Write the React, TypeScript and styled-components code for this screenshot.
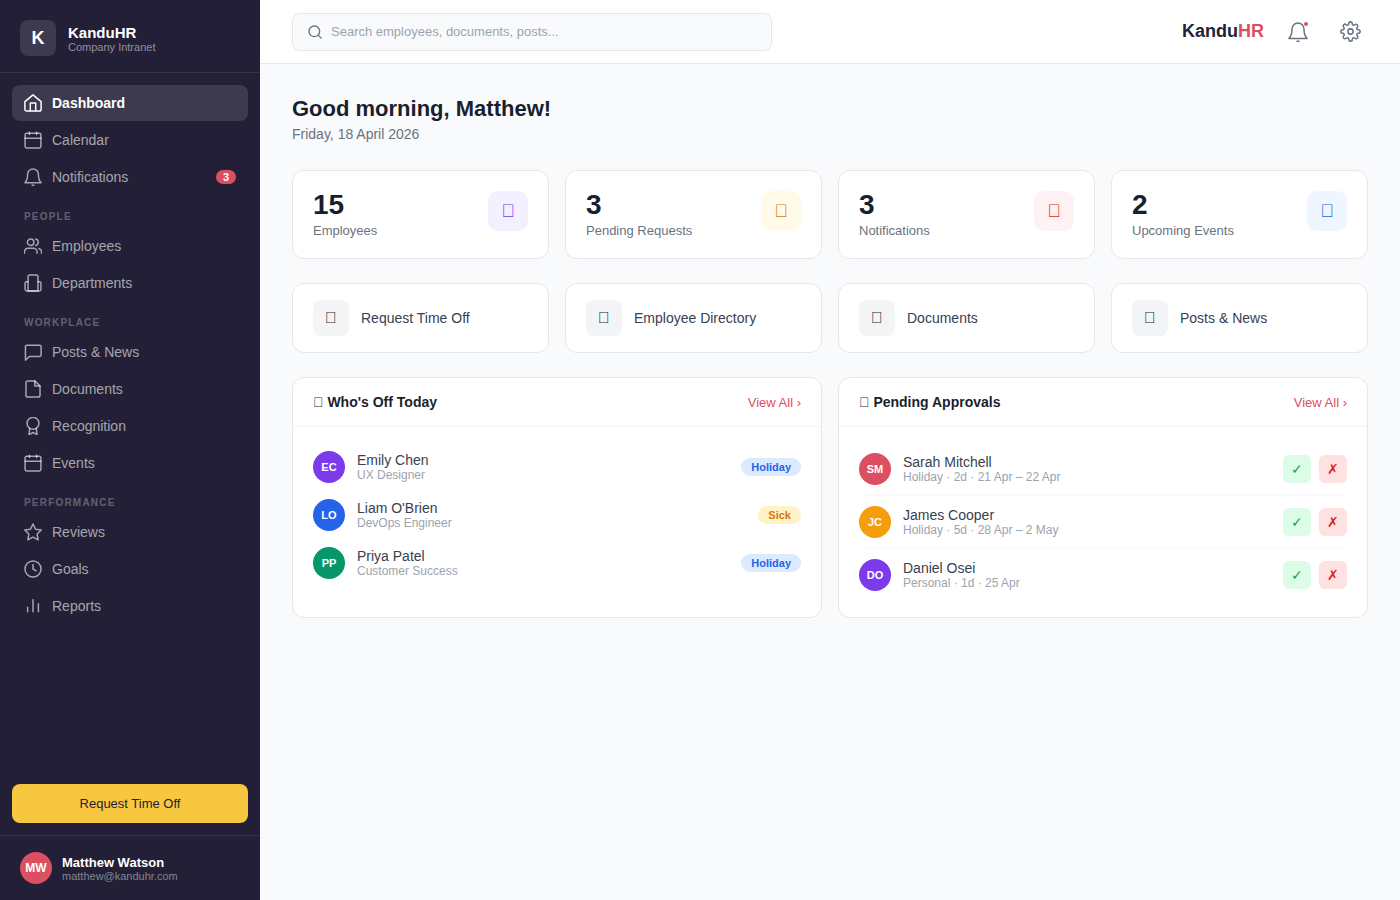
import React from "react";
import styled, { createGlobalStyle } from "styled-components";

const Global = createGlobalStyle`
  * { box-sizing: border-box; }
  html, body { margin: 0; padding: 0; height: 100%; }
  body { font-family: "Liberation Sans", Arial, sans-serif; background: #f9fafb; color: #1a1f2e; }
  button, input { font-family: inherit; }
`;

const Shell = styled.div`display: flex; height: 900px; overflow: hidden;`;
const Sidebar = styled.aside`width: 260px; flex: none; background: #231f36; display: flex; flex-direction: column; height: 900px;`;
const Brand = styled.div`display: flex; align-items: center; gap: 12px; padding: 20px 20px 16px; height: 73px; border-bottom: 1px solid rgba(255,255,255,.08);`;
const BrandMark = styled.div`width: 36px; height: 36px; border-radius: 8px; background: #3d394e; color: #fff; font-weight: 700; font-size: 18px; display: flex; align-items: center; justify-content: center;`;
const BrandText = styled.div`display: flex; flex-direction: column; margin-top: 1px;`;
const BrandName = styled.div`color: #fff; font-weight: 700; font-size: 15px; line-height: 17px;`;
const BrandSub = styled.div`color: rgba(255,255,255,.5); font-size: 11px; line-height: 13px;`;
const Nav = styled.nav`flex: 1; padding: 12px; display: flex; flex-direction: column; gap: 1px;`;
const NavItem = styled.div<{ $active?: boolean }>`
  display: flex; align-items: center; gap: 10px; height: 36px; padding: 0 12px; border-radius: 8px; font-size: 14px;
  font-weight: ${p => (p.$active ? 700 : 400)};
  color: ${p => (p.$active ? "#fff" : "rgba(255,255,255,.6)")};
  background: ${p => (p.$active ? "rgba(255,255,255,.12)" : "transparent")};
  svg { flex: none; }
`;
const NavLabel = styled.span`flex: 1;`;
const NavBadge = styled.span`background: #dc4f60; color: #fff; font-size: 11px; font-weight: 700; border-radius: 10px; padding: 1px 7px; line-height: 12px;`;
const Section = styled.div`color: rgba(255,255,255,.3); font-size: 10px; font-weight: 700; letter-spacing: 1.2px; line-height: 12px; padding: 15px 12px 4px;`;
const CtaWrap = styled.div`padding: 0 12px 12px;`;
const Cta = styled.button`width: 100%; height: 39px; border: none; border-radius: 8px; background: #f7c83f; color: #231f36; font-size: 13px;`;
const UserBar = styled.div`display: flex; align-items: center; gap: 10px; padding: 16px 20px; height: 65px; border-top: 1px solid rgba(255,255,255,.08);`;
const UserAvatar = styled.div`width: 32px; height: 32px; border-radius: 50%; background: #dc4f60; color: #fff; font-size: 12px; font-weight: 700; display: flex; align-items: center; justify-content: center;`;
const UserText = styled.div`display: flex; flex-direction: column; margin-top: 2px;`;
const UserName = styled.div`color: #fff; font-size: 13px; font-weight: 700; line-height: 15px;`;
const UserMail = styled.div`color: rgba(255,255,255,.45); font-size: 11px; line-height: 13px;`;

const Main = styled.main`flex: 1; min-width: 0; display: flex; flex-direction: column;`;
const Topbar = styled.header`height: 64px; flex: none; background: #fff; border-bottom: 1px solid #e5e7eb; padding: 0 32px; display: flex; align-items: center; justify-content: space-between;`;
const Search = styled.div`width: 480px; height: 38px; border: 1px solid #e5e7eb; background: #f9fafb; border-radius: 8px; padding: 0 14px; display: flex; align-items: center; gap: 8px; color: #9ca3af; font-size: 13px;`;
const SearchGlyph = styled.span`display: flex; color: #6b7280;`;
const TopRight = styled.div`display: flex; align-items: center; gap: 16px;`;
const Logo = styled.div`font-size: 18px; font-weight: 700; color: #231f36;`;
const LogoAccent = styled.span`color: #dc4f60;`;
const IconBtn = styled.div`width: 36px; height: 36px; display: flex; align-items: center; justify-content: center; color: #6b7280; position: relative;`;
const Dot = styled.span`position: absolute; top: 8px; right: 8px; width: 4px; height: 4px; border-radius: 50%; background: #dc4f60;`;

const Content = styled.div`padding: 32px; display: flex; flex-direction: column;`;
const Title = styled.h1`margin: 0; font-size: 22px; line-height: 26px; font-weight: 700; color: #1a1f2e;`;
const Sub = styled.p`margin: 4px 0 0; font-size: 14px; line-height: 16px; color: #6b7280;`;
const Grid4 = styled.div<{ $top: number }>`display: grid; grid-template-columns: repeat(4, 1fr); gap: 16px; margin-top: ${p => p.$top}px;`;
const StatCard = styled.div`height: 89px; background: #fff; border: 1px solid #e5e7eb; border-radius: 12px; padding: 20px; display: flex; justify-content: space-between; align-items: flex-start;`;
const StatText = styled.div`display: flex; flex-direction: column;`;
const StatValue = styled.div`font-size: 28px; line-height: 28px; font-weight: 700; color: #1a1f2e; margin-bottom: 4px;`;
const StatLabel = styled.div`font-size: 13px; line-height: 15px; color: #6b7280;`;
const StatIcon = styled.div<{ $bg: string; $fg: string }>`width: 40px; height: 40px; border-radius: 10px; background: ${p => p.$bg}; color: ${p => p.$fg}; font-size: 18px; display: flex; align-items: center; justify-content: center;`;
const QuickCard = styled.div`height: 70px; background: #fff; border: 1px solid #e5e7eb; border-radius: 12px; padding: 0 20px; display: flex; align-items: center; gap: 12px; font-size: 14px; color: #374151;`;
const QuickIcon = styled.div`width: 36px; height: 36px; border-radius: 8px; background: #f3f4f6; color: #1a1f2e; font-size: 16px; display: flex; align-items: center; justify-content: center;`;
const Panels = styled.div`display: grid; grid-template-columns: 1fr 1fr; gap: 16px; margin-top: 24px;`;
const Panel = styled.section`height: 241px; background: #fff; border: 1px solid #e5e7eb; border-radius: 12px; overflow: hidden;`;
const PanelHead = styled.div`height: 49px; padding: 0 20px; display: flex; align-items: center; justify-content: space-between; border-bottom: 1px solid #f3f4f6;`;
const PanelTitle = styled.div`font-size: 14px; font-weight: 700; color: #1a1f2e;`;
const ViewAll = styled.a`font-size: 13px; color: #dc4f60;`;
const PanelBody = styled.div`padding: 16px 20px;`;
const OffRow = styled.div`height: 48px; display: flex; align-items: center; gap: 12px;`;
const Avatar = styled.div<{ $bg: string }>`width: 32px; height: 32px; border-radius: 50%; flex: none; background: ${p => p.$bg}; color: #fff; font-size: 11px; font-weight: 700; display: flex; align-items: center; justify-content: center;`;
const Person = styled.div`flex: 1; display: flex; flex-direction: column;`;
const PersonName = styled.div`font-size: 14px; line-height: 16px; color: #374151;`;
const PersonSub = styled.div`font-size: 12px; line-height: 14px; color: #9ca3af;`;
const Tag = styled.span<{ $bg: string; $fg: string }>`background: ${p => p.$bg}; color: ${p => p.$fg}; font-size: 11px; font-weight: 700; line-height: 18px; padding: 0 10px; border-radius: 10px;`;
const ApprovalRow = styled.div`height: 53px; display: flex; align-items: center; gap: 12px; border-bottom: 1px solid #f9fafb; &:last-child { border-bottom: none; height: 52px; }`;
const Actions = styled.div`display: flex; gap: 8px;`;
const ActionBtn = styled.div<{ $bg: string; $fg: string }>`width: 28px; height: 28px; border-radius: 6px; background: ${p => p.$bg}; color: ${p => p.$fg}; font-size: 14px; display: flex; align-items: center; justify-content: center;`;

const Ico: React.FC<{ size?: number; box?: string; sw?: number; children: React.ReactNode }> = ({ size = 18, box = "2 2 20 20", sw = 1.65, children }) => (
  <svg width={size} height={size} viewBox={box} fill="none" stroke="currentColor" strokeWidth={sw} strokeLinecap="round" strokeLinejoin="round">{children}</svg>
);
const bellPaths = (
  <>
    <path d="M6 9a6 6 0 0 1 12 0c0 6 1.2 7.6 3 9.4H3C4.8 16.6 6 15 6 9z" />
    <path d="M11 21.2h2" />
  </>
);
const calPaths = (
  <>
    <rect x="3.2" y="4.6" width="17.6" height="16.2" rx="1.8" />
    <path d="M8 3.4v2.4M16 3.4v2.4M3.2 10h17.6" />
  </>
);
const I = {
  home: <Ico><path d="M3 10.5 12 3l9 7.5V19a2 2 0 0 1-2 2H5a2 2 0 0 1-2-2z" /><path d="M9 21v-9h6v9" /></Ico>,
  cal: <Ico>{calPaths}</Ico>,
  bell: <Ico>{bellPaths}</Ico>,
  users: <Ico><circle cx="9.4" cy="7.8" r="3.6" /><path d="M2.5 20v-1.4a4 4 0 0 1 4-4h6a4 4 0 0 1 4 4V20" /><path d="M15 4.2a3.7 3.7 0 0 1 0 7.2M21.5 20v-1.4a4 4 0 0 0-3-3.8" /></Ico>,
  dept: <Ico><path d="M6.5 20.8V4.8a1.8 1.8 0 0 1 1.8-1.8h7.4a1.8 1.8 0 0 1 1.8 1.8v16z" /><path d="M6.5 10.5H5a1.8 1.8 0 0 0-1.8 1.8V19A1.8 1.8 0 0 0 5 20.8h14a1.8 1.8 0 0 0 1.8-1.8v-6.7A1.8 1.8 0 0 0 19 10.5h-1.5" /></Ico>,
  chat: <Ico><path d="M3.6 21V6A1.6 1.6 0 0 1 5.2 4.4h14.2A1.6 1.6 0 0 1 21 6v9.4a1.6 1.6 0 0 1-1.6 1.6H8z" /></Ico>,
  doc: <Ico><path d="M14 3H6.2a2 2 0 0 0-2 2v14a2 2 0 0 0 2 2h11.6a2 2 0 0 0 2-2V8.6z" /><path d="M14 3v5.6h5.8" /></Ico>,
  award: <Ico><circle cx="12" cy="9" r="6.6" /><path d="M8.4 14.6 7.5 21.6l4.5-2.4 4.5 2.4-.9-7" /></Ico>,
  star: <Ico><path d="M12 3.1l2.8 5.8 6.4.9-4.6 4.5 1.1 6.4-5.7-3-5.7 3 1.1-6.4-4.6-4.5 6.4-.9z" /></Ico>,
  clock: <Ico><circle cx="12" cy="12" r="8.9" /><path d="M12 7v5l3.5 2" /></Ico>,
  bars: <Ico><path d="M6 18.4v-5M12 18.4V5M18 18.4V9.4" /></Ico>,
  search: <Ico size={16} box="0 0 24 24" sw={2}><circle cx="11" cy="11" r="8" /><path d="m21 21-4.3-4.3" /></Ico>,
  gear: <Ico size={21} box="0 0 24 24" sw={1.75}><circle cx="12" cy="12" r="3" /><path d="M19.4 15a1.65 1.65 0 0 0 .33 1.82l.06.06a2 2 0 1 1-2.83 2.83l-.06-.06a1.65 1.65 0 0 0-1.82-.33 1.65 1.65 0 0 0-1 1.51V21a2 2 0 1 1-4 0v-.09A1.65 1.65 0 0 0 9 19.4a1.65 1.65 0 0 0-1.82.33l-.06.06a2 2 0 1 1-2.83-2.83l.06-.06a1.65 1.65 0 0 0 .33-1.82 1.65 1.65 0 0 0-1.51-1H3a2 2 0 1 1 0-4h.09A1.65 1.65 0 0 0 4.6 9a1.65 1.65 0 0 0-.33-1.82l-.06-.06a2 2 0 1 1 2.83-2.83l.06.06a1.65 1.65 0 0 0 1.82.33H9a1.65 1.65 0 0 0 1-1.51V3a2 2 0 1 1 4 0v.09a1.65 1.65 0 0 0 1 1.51 1.65 1.65 0 0 0 1.82-.33l.06-.06a2 2 0 1 1 2.83 2.83l-.06.06a1.65 1.65 0 0 0-.33 1.82V9a1.65 1.65 0 0 0 1.51 1H21a2 2 0 1 1 0 4h-.09a1.65 1.65 0 0 0-1.51 1z" /></Ico>,
  bellBig: <Ico size={20} sw={1.5}>{bellPaths}</Ico>,
};

const NavRow = ({ icon, label, active, badge }: { icon: React.ReactNode; label: string; active?: boolean; badge?: string }) => (
  <NavItem $active={active}>{icon}<NavLabel>{label}</NavLabel>{badge && <NavBadge>{badge}</NavBadge>}</NavItem>
);

const TOFU = "\uE000";
const stats = [
  { v: "15", l: "Employees", bg: "#f3f0ff", fg: "#7c3aed" },
  { v: "3", l: "Pending Requests", bg: "#fffbeb", fg: "#d97706" },
  { v: "3", l: "Notifications", bg: "#fef2f2", fg: "#dc2626" },
  { v: "2", l: "Upcoming Events", bg: "#eff6ff", fg: "#2563eb" },
];
const quick = ["Request Time Off", "Employee Directory", "Documents", "Posts & News"];
const off = [
  { i: "EC", c: "#7c3aed", n: "Emily Chen", r: "UX Designer", t: "Holiday" },
  { i: "LO", c: "#2563eb", n: "Liam O'Brien", r: "DevOps Engineer", t: "Sick" },
  { i: "PP", c: "#059669", n: "Priya Patel", r: "Customer Success", t: "Holiday" },
];
const approvals = [
  { i: "SM", c: "#dc4f60", n: "Sarah Mitchell", r: "Holiday · 2d · 21 Apr – 22 Apr" },
  { i: "JC", c: "#f59e0b", n: "James Cooper", r: "Holiday · 5d · 28 Apr – 2 May" },
  { i: "DO", c: "#7c3aed", n: "Daniel Osei", r: "Personal · 1d · 25 Apr" },
];

export default function App() {
  return (
    <Shell>
      <Global />
      <Sidebar>
        <Brand>
          <BrandMark>K</BrandMark>
          <BrandText><BrandName>KanduHR</BrandName><BrandSub>Company Intranet</BrandSub></BrandText>
        </Brand>
        <Nav>
          <NavRow icon={I.home} label="Dashboard" active />
          <NavRow icon={I.cal} label="Calendar" />
          <NavRow icon={I.bell} label="Notifications" badge="3" />
          <Section>PEOPLE</Section>
          <NavRow icon={I.users} label="Employees" />
          <NavRow icon={I.dept} label="Departments" />
          <Section>WORKPLACE</Section>
          <NavRow icon={I.chat} label="Posts & News" />
          <NavRow icon={I.doc} label="Documents" />
          <NavRow icon={I.award} label="Recognition" />
          <NavRow icon={I.cal} label="Events" />
          <Section>PERFORMANCE</Section>
          <NavRow icon={I.star} label="Reviews" />
          <NavRow icon={I.clock} label="Goals" />
          <NavRow icon={I.bars} label="Reports" />
        </Nav>
        <CtaWrap><Cta>Request Time Off</Cta></CtaWrap>
        <UserBar>
          <UserAvatar>MW</UserAvatar>
          <UserText><UserName>Matthew Watson</UserName><UserMail>matthew@kanduhr.com</UserMail></UserText>
        </UserBar>
      </Sidebar>
      <Main>
        <Topbar>
          <Search><SearchGlyph>{I.search}</SearchGlyph><span>Search employees, documents, posts...</span></Search>
          <TopRight>
            <Logo>Kandu<LogoAccent>HR</LogoAccent></Logo>
            <IconBtn>{I.bellBig}<Dot /></IconBtn>
            <IconBtn>{I.gear}</IconBtn>
          </TopRight>
        </Topbar>
        <Content>
          <Title>Good morning, Matthew!</Title>
          <Sub>Friday, 18 April 2026</Sub>
          <Grid4 $top={28}>
            {stats.map(s => (
              <StatCard key={s.l}>
                <StatText><StatValue>{s.v}</StatValue><StatLabel>{s.l}</StatLabel></StatText>
                <StatIcon $bg={s.bg} $fg={s.fg}>{TOFU}</StatIcon>
              </StatCard>
            ))}
          </Grid4>
          <Grid4 $top={24}>
            {quick.map(l => (
              <QuickCard key={l}><QuickIcon>{TOFU}</QuickIcon>{l}</QuickCard>
            ))}
          </Grid4>
          <Panels>
            <Panel>
              <PanelHead><PanelTitle>{TOFU} Who's Off Today</PanelTitle><ViewAll>View All ›</ViewAll></PanelHead>
              <PanelBody>
                {off.map(o => (
                  <OffRow key={o.i}>
                    <Avatar $bg={o.c}>{o.i}</Avatar>
                    <Person><PersonName>{o.n}</PersonName><PersonSub>{o.r}</PersonSub></Person>
                    <Tag $bg={o.t === "Sick" ? "#fef3c7" : "#dbeafe"} $fg={o.t === "Sick" ? "#d97706" : "#2563eb"}>{o.t}</Tag>
                  </OffRow>
                ))}
              </PanelBody>
            </Panel>
            <Panel>
              <PanelHead><PanelTitle>{TOFU} Pending Approvals</PanelTitle><ViewAll>View All ›</ViewAll></PanelHead>
              <PanelBody>
                {approvals.map(o => (
                  <ApprovalRow key={o.i}>
                    <Avatar $bg={o.c}>{o.i}</Avatar>
                    <Person><PersonName>{o.n}</PersonName><PersonSub>{o.r}</PersonSub></Person>
                    <Actions>
                      <ActionBtn $bg="#dcfce7" $fg="#16a34a">✓</ActionBtn>
                      <ActionBtn $bg="#fee2e2" $fg="#dc2626">✗</ActionBtn>
                    </Actions>
                  </ApprovalRow>
                ))}
              </PanelBody>
            </Panel>
          </Panels>
        </Content>
      </Main>
    </Shell>
  );
}
